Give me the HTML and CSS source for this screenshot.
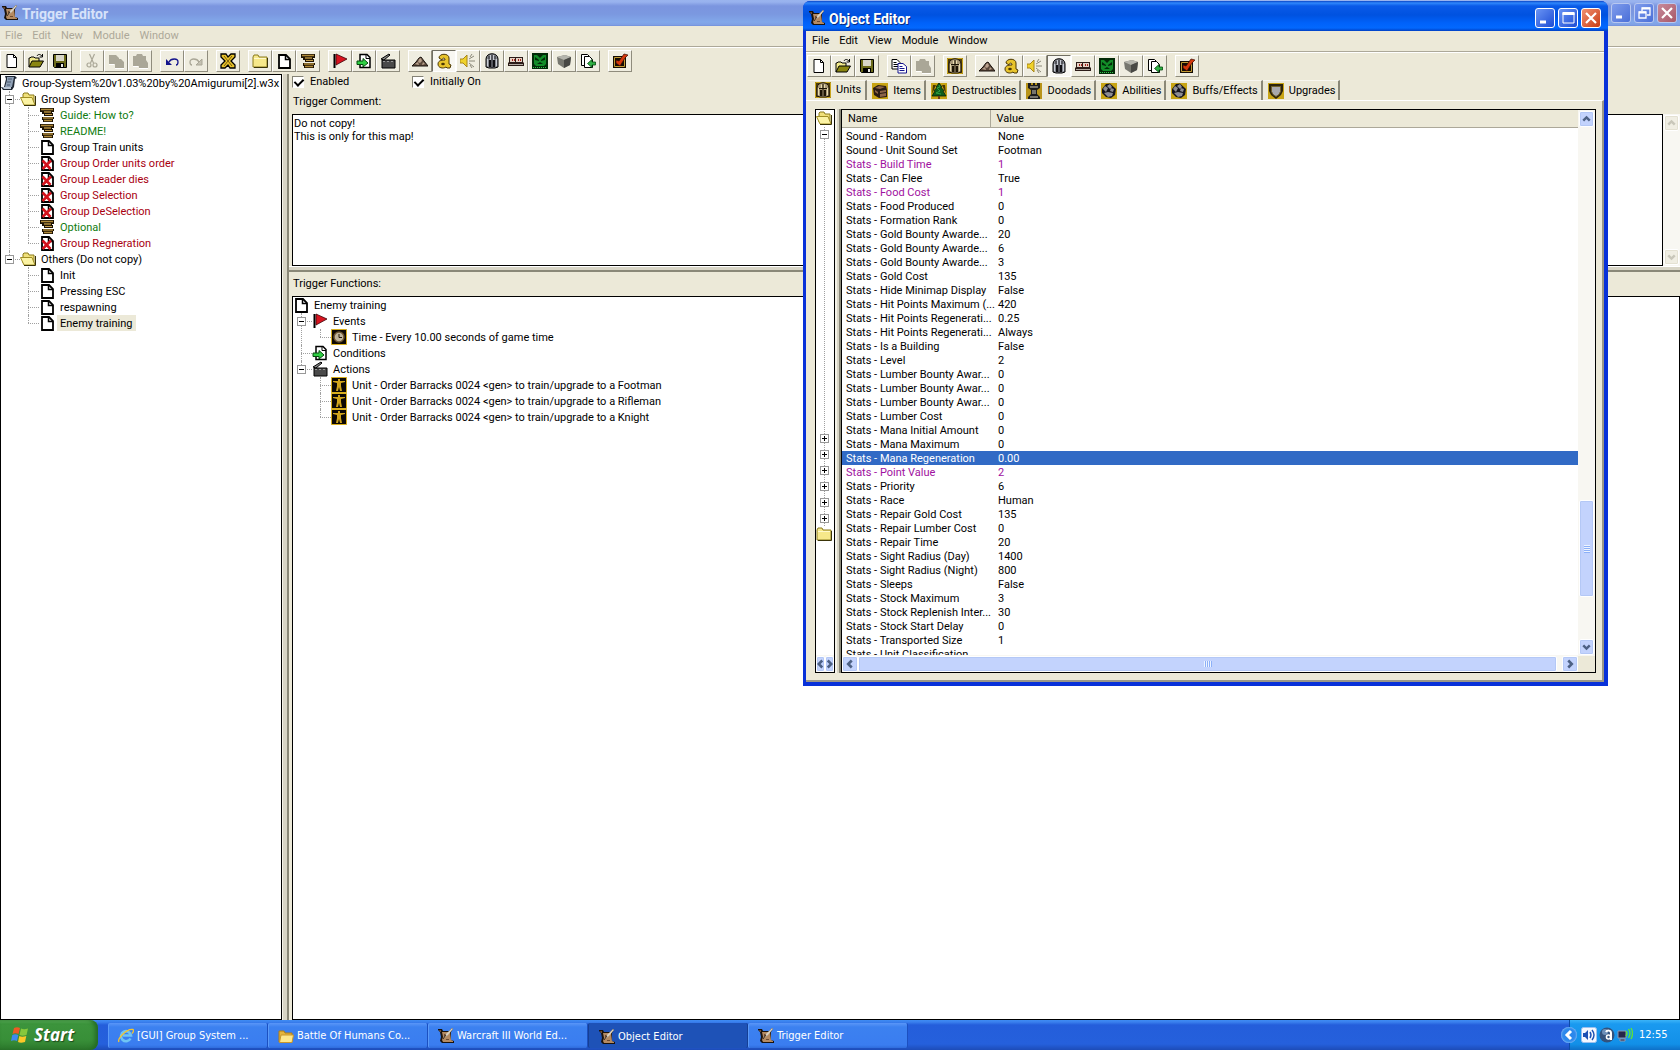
FILE: index.html
```html
<!DOCTYPE html>
<html lang="en">
<head>
  <meta charset="UTF-8">
  <meta name="viewport" content="width=device-width, initial-scale=1.0">
  <title>Trigger Editor</title>
  <link rel="stylesheet" href="styles.css">
</head>
<body>
  <!-- icon sprite -->
  <svg class="sprite" aria-hidden="true">
    <symbol id="app" viewBox="0 0 16 16">
      <path d="M0 1h4l1 2h6l3-3 1 1-2 3v8l3 1v2H4l-2-2 1-4-1-5-2-2z" fill="#1a120c"/>
      <path d="M4 4h8l1 8 2 1v1H5l-1-2 1-3z" fill="#b48a62"/>
      <path d="M1 2h2v2H2zM6 6h2v3H6zM8 11h3v1H8z" fill="#6d4a30"/>
      <path d="M6 10l2-4 6-6 1 1-5 6z" fill="#d8d0c0"/>
      <path d="M5 11l3-4" stroke="#3a2a1c" fill="none"/>
    </symbol>
    <symbol id="map" viewBox="0 0 16 16">
      <path d="M4 1h10l2 2-2 1-1 8-2 3H2l-2-3h3l2-8z" fill="#1e2733"/>
      <path d="M6 2h7l-2 10H4L6 5z" fill="#8fa0b5"/>
      <path d="M7 4h4M6 7h4M6 10h3" stroke="#4a5a70"/>
      <path d="M1 12h9v2H3z" fill="#b9c4d2"/>
    </symbol>
    <symbol id="new" viewBox="0 0 16 16">
      <path d="M3 1.500h6.500l3 3v10H3z" fill="#fff" stroke="#000"/>
      <path d="M9.500 1.500v3h3" fill="none" stroke="#000"/>
    </symbol>
    <symbol id="page" viewBox="0 0 16 16">
      <path d="M3 2h7l4 4v9H3z" fill="#fff" stroke="#000" stroke-width="1.800"/>
      <path d="M9.500 2v4.500H14" fill="none" stroke="#000" stroke-width="1.500"/>
    </symbol>
    <symbol id="pagex" viewBox="0 0 16 16">
      <path d="M3 2h7l4 4v9H3z" fill="#fff" stroke="#000" stroke-width="1.800"/>
      <path d="M9.500 2v4.500H14" fill="none" stroke="#000" stroke-width="1.500"/>
      <path d="M3.500 5.500l8 8.500M12 5.500L3.500 14" stroke="#d4121c" stroke-width="2.600"/>
    </symbol>
    <symbol id="open" viewBox="0 0 16 16">
      <path d="M1 14V5h1l1-1h3l1 1h4v3" fill="#f2ea8c" stroke="#000"/>
      <path d="M1 14l3-6h11.500l-3.500 6z" fill="#8a8610" stroke="#000"/>
      <path d="M9 3c1-2 3-2 5 0M14.500 1v3h-3" fill="none" stroke="#000"/>
    </symbol>
    <symbol id="save" viewBox="0 0 16 16">
      <path d="M1.500 1.500h13v13h-12l-1-1z" fill="#6b6a1a" stroke="#000"/>
      <path d="M4 2h8v6H4z" fill="#d8d6c8"/>
      <path d="M4 10h8v4H4z" fill="#000"/>
      <path d="M9 11h2v3H9z" fill="#e8e8e0"/>
    </symbol>
    <symbol id="cut" viewBox="0 0 16 16">
      <path d="M5.500 1l4 9M10.500 1l-4 9" fill="none" stroke="#aaa797" stroke-width="1.200"/>
      <circle cx="5" cy="12" r="2" fill="none" stroke="#aaa797" stroke-width="1.200"/>
      <circle cx="11" cy="12" r="2" fill="none" stroke="#aaa797" stroke-width="1.200"/>
    </symbol>
    <symbol id="copyoff" viewBox="0 0 16 16">
      <path d="M1 2h7l3 3v1h2l3 3v6H7v-4H1z" fill="#aaa797"/>
      <path d="M7 15.500h9M1 11.500h5" stroke="#fff"/>
    </symbol>
    <symbol id="pasteoff" viewBox="0 0 16 16">
      <path d="M1 3h3l1-2h5l1 2h3v4l2 3v5H7v-2H1z" fill="#aaa797"/>
      <path d="M7 15.500h9M1 13.500h5" stroke="#fff"/>
    </symbol>
    <symbol id="copy" viewBox="0 0 16 16">
      <path d="M1 1.500h5l3 3V11H1z" fill="#fff" stroke="#000"/>
      <path d="M2.500 4.500h3M2.500 6.500h5M2.500 8.500h5" stroke="#000"/>
      <path d="M7 5.500h5l3.500 3V15H7z" fill="#fff" stroke="#14148c"/>
      <path d="M8.500 8.500h3M8.500 10.500h5M8.500 12.500h5" stroke="#14148c"/>
    </symbol>
    <symbol id="undo" viewBox="0 0 16 16">
      <path d="M5 9c2-4 9-4 9 0 0 2-1 3-2 3" fill="none" stroke="#14148c" stroke-width="1.300"/>
      <path d="M2 6v6h6z" fill="#14148c"/>
    </symbol>
    <symbol id="redo" viewBox="0 0 16 16">
      <path d="M11 9c-2-4-9-4-9 0 0 2 1 3 2 3" fill="none" stroke="#aaa797" stroke-width="1.300"/>
      <path d="M14 6v6H8z" fill="#c4c1b2" stroke="#aaa797"/>
    </symbol>
    <symbol id="vars" viewBox="0 0 16 16">
      <path d="M1 1h5l2 3 3-3h4v3l-4 4 4 4v3h-5l-2-3-3 3H1v-3l4-4-4-4z" fill="#e8c42c" stroke="#000" stroke-width="1.300"/>
      <path d="M4 3l8 10M12 3l-8 10" stroke="#7a5a08"/>
    </symbol>
    <symbol id="folder" viewBox="0 0 16 16">
      <path d="M1 4l1-2h4l1 2h8v10H1z" fill="#f6e88a" stroke="#8a7a1c"/>
      <path d="M2 5.500h12" stroke="#fff9cc"/>
      <path d="M2 14.500h13.500V5" fill="none" stroke="#3a3408"/>
    </symbol>
    <symbol id="folderopen" viewBox="0 0 16 16">
      <path d="M3 12V3l1-1h4l1 2h5v9z" fill="#f0e07a" stroke="#8a7a1c"/>
      <path d="M0.500 6.500H12l3 7.500H4z" fill="#fbf3a4" stroke="#a08e24"/>
      <path d="M4 14.500h11.500V5" fill="none" stroke="#3a3408"/>
    </symbol>
    <symbol id="comment" viewBox="0 0 16 16">
      <path d="M1 1h14v4h-2v1h1v3H5V7H3V5H1zM3 10h12v2h-1v3H4v-2H3z" fill="#1c1204"/>
      <path d="M2 2.500h12M5 5h7M4 11h10M5 13.500h8" stroke="#b08a3a" stroke-width="1.300"/>
      <path d="M6 7.500h7" stroke="#c49c4c"/>
    </symbol>
    <symbol id="flag" viewBox="0 0 16 16">
      <path d="M2.500 1v14" stroke="#000" stroke-width="2"/>
      <path d="M4 1l11 5-11 6z" fill="#d81420" stroke="#3c0408" stroke-width=".8"/>
    </symbol>
    <symbol id="cond" viewBox="0 0 16 16">
      <path d="M4 1.500h7l3 3v10H4z" fill="#fff" stroke="#000" stroke-width="1.500"/>
      <path d="M10 1.500v4h4" fill="none" stroke="#000"/>
      <path d="M1 8h6V5.500l5 4.500-5 4v-2.500H1z" fill="#2fd044" stroke="#044a0c"/>
    </symbol>
    <symbol id="action" viewBox="0 0 16 16">
      <path d="M2 7h13v8H2z" fill="#4a4a4a" stroke="#000"/>
      <path d="M1 6l8-5 1 1-6 5z" fill="#888" stroke="#000"/>
      <path d="M3 8.500h12" stroke="#999" stroke-dasharray="2 2"/>
    </symbol>
    <symbol id="terrain" viewBox="0 0 16 16">
      <path d="M0 13l4-4 3-4 2-1 3 4 4 5z" fill="#5c4a3c" stroke="#1a120c"/>
      <path d="M7 6l2-1 1 3-2 2-2-1zM3 11l3-2 1 3zM11 9l2 2-3 1z" fill="#b8a08c"/>
    </symbol>
    <symbol id="trig" viewBox="0 0 16 16">
      <path d="M3 5c0-5 10-5 10 0v6l2 1-1 3h-3l-1-1c-3 2-8 1-8-3 0-4 5-4 7-4 0-3-3-2-3 0z" fill="#e8c42c" stroke="#4a3604"/>
      <ellipse cx="7" cy="11" rx="1.800" ry="1.300" fill="#4a3604"/>
    </symbol>
    <symbol id="sound" viewBox="0 0 16 16">
      <path d="M0 6h3l4-4v12l-4-4H0z" fill="#f0d22a" stroke="#a8861a"/>
      <path d="M9 6l5-3M9 8h6M9 10l5 4M10 4l2-3M10 12l2 3" stroke="#8a8878"/>
    </symbol>
    <symbol id="helm" viewBox="0 0 16 16">
      <path d="M2 14V6c0-7 12-7 12 0v8l-3 1H5z" fill="#85888f" stroke="#000"/>
      <path d="M5 7h2v7H5zM9 7h2v7H9z" fill="#101014"/>
      <path d="M8 2v13M5 3v3M11 3v3" stroke="#26262c"/>
      <path d="M3.500 13V6M12.500 13V6M6.500 2v5M9.500 2v5" stroke="#c8ccd4"/>
    </symbol>
    <symbol id="camp" viewBox="0 0 16 16">
      <path d="M1 4h14v5l1 1v3H0v-3l1-1z" fill="#2c1c18"/>
      <path d="M2 5h5v4H2zM8 5h6v4H8z" fill="#e6d2c4"/>
      <path d="M4 6h1v2H4zM6 6h1v2H6zM10 6h1v2h-1zM12 6h1v2h-1z" fill="#a02018"/>
      <path d="M1 11.500h14" stroke="#b0a8a0"/>
    </symbol>
    <symbol id="ai" viewBox="0 0 16 16">
      <path d="M0 0h16v16H0z" fill="#022a08"/>
      <path d="M2 2h12v9l-2 2H4l-2-2z" fill="#128c28"/>
      <path d="M3 4l4 3v1L3 7zM13 4L9 7v1l4-1zM5 11l3-2 3 2zM4 1h8L8 5z" fill="#022a08"/>
      <path d="M1 14.500h14" stroke="#35c24c" stroke-dasharray="1 1"/>
    </symbol>
    <symbol id="cube" viewBox="0 0 16 16">
      <path d="M1 4l8-2 6 2-1 8-6 3-6-4z" fill="#77776f"/>
      <path d="M1 4l8-2 6 2-7 3z" fill="#b4b4ac"/>
      <path d="M8 7l7-3-1 8-6 3z" fill="#484844"/>
    </symbol>
    <symbol id="import" viewBox="0 0 16 16">
      <path d="M1.500 1.500h6l2 2v9h-8z" fill="#fff" stroke="#000"/>
      <path d="M4.500 3.500h5l3 3v8h-8z" fill="#fff" stroke="#000"/>
      <path d="M15.500 9H12V6.500L7.500 10.500l4.500 4V12h3.500z" fill="#2fb044" stroke="#044a0c" stroke-width=".8"/>
    </symbol>
    <symbol id="test" viewBox="0 0 16 16">
      <path d="M1 3h13v12H1z" fill="#140c04"/>
      <path d="M2.500 4.500h10v9h-10z" fill="none" stroke="#c49c34"/>
      <path d="M4 7l3 1 5-7 4 1-3 3-5 8-4-3z" fill="#d4380c" stroke="#380800" stroke-width=".7"/>
    </symbol>
    <symbol id="clock" viewBox="0 0 16 16">
      <path d="M.5.500h15v15H.5z" fill="#0c0804" stroke="#d8ae1c"/>
      <circle cx="8" cy="8" r="5" fill="#bfb49c" stroke="#6c5430" stroke-width="1.500"/>
      <path d="M8 5v3.500h3" fill="none" stroke="#241808"/>
    </symbol>
    <symbol id="unit" viewBox="0 0 16 16">
      <path d="M.5.500h15v15H.5z" fill="#0c0804" stroke="#d8ae1c"/>
      <path d="M7 2h2v2h5v1l-4 1v3l1 5H9l-1-4-1 4H5l1-5V6L2 5V4h5z" fill="#d0a41c"/>
    </symbol>
    <symbol id="tabunit" viewBox="0 0 16 16">
      <path d="M0 0h16v16H0z" fill="#4c3c0a"/>
      <path d="M.5.500h15v15H.5z" fill="none" stroke="#c8a41c"/>
      <path d="M2 14V6c0-7 12-7 12 0v8l-3 1H5z" fill="#a89878" stroke="#1c1404"/>
      <path d="M5 8h2v6H5zM9 8h2v6H9zM7.500 2h1v12h-1zM4 6h8v1H4z" fill="#1c1404"/>
      <path d="M3.500 13V6M12.500 13V6M6.500 2.500V6M9.500 2.500V6" stroke="#e8dcae"/>
    </symbol>
    <symbol id="tabitem" viewBox="0 0 16 16">
      <path d="M0 0h16v16H0z" fill="#c8a414"/>
      <path d="M1 5l5-3 8 1 1 4v7l-8 1-5-3z" fill="#2a1c14"/>
      <path d="M3 5l4-2 6 1-5 2zM8 8l6-1v2L8 10zM3 7l3 2v2L3 9zM8 11l6-1v3l-6 1z" fill="#8c6448"/>
    </symbol>
    <symbol id="tree" viewBox="0 0 16 16">
      <path d="M0 0h16v16H0z" fill="#c8a414"/>
      <path d="M2 2h3L1 11zM11 2h3l1 9z" fill="#4a3604"/>
      <path d="M8 0l3 4-1 .5 3 3-1 .5 3 5H1l3-5-1-.5 3-3L5 4z" fill="#0d5c1c" stroke="#04200a" stroke-width=".8"/>
      <path d="M8 2l1 2-3 1 3 3-4 2 5 1" fill="none" stroke="#2fa044"/>
      <path d="M7 13h2v3H7z" fill="#6c3c14"/>
    </symbol>
    <symbol id="rook" viewBox="0 0 16 16">
      <path d="M0 0h16v16H0z" fill="#b8941a"/>
      <path d="M2 0h3v2h2V0h2v2h2V0h3v5l-3 2v4l3 3v2H2v-2l3-3V7L2 5z" fill="#1c1c1c"/>
      <path d="M4 3h8v2H4zM6 7h4v4H6zM4 13h8v2H4z" fill="#77746c"/>
    </symbol>
    <symbol id="fist" viewBox="0 0 16 16">
      <path d="M0 0h16v16H0z" fill="#c8a414"/>
      <path d="M1 6l4-5 4-.5 6 5.500-1 6-4 3-5-1-4-4z" fill="#14141c"/>
      <path d="M2 6l2-3 3 2-2 4zM6 3l3-2 2 3-2 2zM10 5l3 1-1 3-3-1zM3 10l4-1 5 1-1 3-4 1z" fill="#8c8c94"/>
    </symbol>
    <symbol id="shield" viewBox="0 0 16 16">
      <path d="M0 0h16v16H0z" fill="#c8a414"/>
      <path d="M1 1h14v7l-2 4-5 4-5-4-2-4z" fill="#2c240c"/>
      <path d="M3.500 3.500h9v5l-1.500 3-3 2-3-2-1.500-3z" fill="#a8a8ac" stroke="#70602c"/>
    </symbol>
    <symbol id="ie" viewBox="0 0 16 16">
      <path d="M12.500 10.500A5 5 0 1 1 13 7.500H5" fill="none" stroke="#6fc4f4" stroke-width="2.600"/>
      <path d="M1 14C-1 11 9 0 15 1.500c1 1 0 3-1 4" fill="none" stroke="#f4c430" stroke-width="1.300"/>
    </symbol>
    <symbol id="xpfolder" viewBox="0 0 16 16">
      <path d="M1 3h5l1 2h7v9H1z" fill="#e4b43c" stroke="#b07c14"/>
      <path d="M3 7h12.500L14 14.500H1.500z" fill="#fde78c" stroke="#c8962c"/>
    </symbol>
    <symbol id="win" viewBox="0 0 20 20">
      <path d="M4 3c2-1 4-1 6 0L8.500 9c-2-1-4-1-6 0z" fill="#ee5a24"/>
      <path d="M11 3.500c2 1 4 1 7 0L16.500 10c-3 1-5 1-7 0z" fill="#86c83c"/>
      <path d="M2.300 10c2-1 4-1 6 0L7 16c-2-1-4-1-6 0z" fill="#3f8af0"/>
      <path d="M9.300 11c2 1 4 1 7 0L15 17c-3 1-5 1-7 0z" fill="#fcc828"/>
    </symbol>
    <symbol id="vol" viewBox="0 0 16 16">
      <rect x=".5" y=".5" width="15" height="15" rx="2" fill="#f4f8ff" stroke="#9cc0ee"/>
      <path d="M2 6h2l3-3v10l-3-3H2z" fill="#1c50b4"/>
      <path d="M9 5q2 3 0 6M11 3q4 5 0 10" fill="none" stroke="#1c50b4" stroke-width="1.400"/>
    </symbol>
    <symbol id="ball" viewBox="0 0 16 16">
      <circle cx="8" cy="8" r="7.500" fill="#33527c"/>
      <circle cx="6" cy="5" r="3" fill="#6d8fb8"/>
      <path d="M7 5c1-2 5-2 5 1v7" fill="none" stroke="#fff" stroke-width="2"/>
      <circle cx="9.500" cy="10" r="2" fill="none" stroke="#fff" stroke-width="1.600"/>
    </symbol>
    <symbol id="net" viewBox="0 0 16 16">
      <path d="M1 4h8v7H1zM3 12h5v2H3z" fill="#26264a" stroke="#8c9ab4"/>
      <path d="M9 4q2 2 0 5M11.500 2q3 4 0 9M14 1q3 5 0 11" fill="none" stroke="#5ee03c" stroke-width="1.400"/>
    </symbol>
    <symbol id="up" viewBox="0 0 16 16"><path d="M4 10l4-4 4 4" fill="none" stroke="currentColor" stroke-width="3"/></symbol>
    <symbol id="down" viewBox="0 0 16 16"><path d="M4 6l4 4 4-4" fill="none" stroke="currentColor" stroke-width="3"/></symbol>
    <symbol id="left" viewBox="0 0 16 16"><path d="M10 4L6 8l4 4" fill="none" stroke="currentColor" stroke-width="3"/></symbol>
    <symbol id="right" viewBox="0 0 16 16"><path d="M6 4l4 4-4 4" fill="none" stroke="currentColor" stroke-width="3"/></symbol>
    <symbol id="min" viewBox="0 0 16 16"><path d="M3 12h6" stroke="#fff" stroke-width="3"/></symbol>
    <symbol id="max" viewBox="0 0 16 16"><path d="M3 3h11v10H3z" fill="none" stroke="#fff"/><path d="M2.500 3.500h12" stroke="#fff" stroke-width="3"/></symbol>
    <symbol id="restore" viewBox="0 0 16 16"><path d="M6 6V3h8v7h-3M3 7h7v6H3z" fill="none" stroke="#fff" stroke-width="1.300"/><path d="M6 3.500h8M3 7.500h7" stroke="#fff" stroke-width="2"/></symbol>
    <symbol id="close" viewBox="0 0 16 16"><path d="M3 3l10 10M13 3L3 13" stroke="#fff" stroke-width="2.200"/></symbol>
  </svg>

  <main class="trigger-editor">
    <header class="titlebar">
      <svg class="icon"><use href="#app"/></svg>
      <h1>Trigger Editor</h1>
      <div class="winbtns">
        <button class="winbtn" aria-label="Minimize"><svg class="icon"><use href="#min"/></svg></button>
        <button class="winbtn" aria-label="Restore"><svg class="icon"><use href="#restore"/></svg></button>
        <button class="winbtn red" aria-label="Close"><svg class="icon"><use href="#close"/></svg></button>
      </div>
    </header>
    <nav class="menu disabled">
      <button>File</button><button>Edit</button><button>New</button><button>Module</button><button>Window</button>
    </nav>
    <div class="toolbar">
      <button aria-label="New map"><svg class="icon"><use href="#new"/></svg></button>
      <button aria-label="Open"><svg class="icon"><use href="#open"/></svg></button>
      <button aria-label="Save"><svg class="icon"><use href="#save"/></svg></button>
      <span class="sep"></span>
      <button aria-label="Cut"><svg class="icon"><use href="#cut"/></svg></button>
      <button aria-label="Copy"><svg class="icon"><use href="#copyoff"/></svg></button>
      <button aria-label="Paste"><svg class="icon"><use href="#pasteoff"/></svg></button>
      <span class="sep"></span>
      <button aria-label="Undo"><svg class="icon"><use href="#undo"/></svg></button>
      <button aria-label="Redo"><svg class="icon"><use href="#redo"/></svg></button>
      <span class="sep"></span>
      <button aria-label="Variables"><svg class="icon"><use href="#vars"/></svg></button>
      <span class="sep"></span>
      <button aria-label="New category"><svg class="icon"><use href="#folder"/></svg></button>
      <button aria-label="New trigger"><svg class="icon"><use href="#page"/></svg></button>
      <button aria-label="New comment"><svg class="icon"><use href="#comment"/></svg></button>
      <span class="sep"></span>
      <button aria-label="New event"><svg class="icon"><use href="#flag"/></svg></button>
      <button aria-label="New condition"><svg class="icon"><use href="#cond"/></svg></button>
      <button aria-label="New action"><svg class="icon"><use href="#action"/></svg></button>
      <span class="sep"></span>
      <button aria-label="Terrain editor"><svg class="icon"><use href="#terrain"/></svg></button>
      <button class="pressed" aria-label="Trigger editor"><svg class="icon"><use href="#trig"/></svg></button>
      <button aria-label="Sound editor"><svg class="icon"><use href="#sound"/></svg></button>
      <button aria-label="Object editor"><svg class="icon"><use href="#helm"/></svg></button>
      <button aria-label="Campaign editor"><svg class="icon"><use href="#camp"/></svg></button>
      <button aria-label="AI editor"><svg class="icon"><use href="#ai"/></svg></button>
      <button aria-label="Object manager"><svg class="icon"><use href="#cube"/></svg></button>
      <button aria-label="Import manager"><svg class="icon"><use href="#import"/></svg></button>
      <span class="sep"></span>
      <button aria-label="Test map"><svg class="icon"><use href="#test"/></svg></button>
    </div>

    <div class="panes">
      <section class="tree-pane">
        <div class="row"><svg class="icon"><use href="#map"/></svg><span>Group-System%20v1.03%20by%20Amigurumi[2].w3x</span></div>
        <ul class="tree">
          <li>
            <div class="row"><button class="toggle" aria-label="Collapse"></button><svg class="icon"><use href="#folderopen"/></svg><span>Group System</span></div>
            <ul>
              <li class="green"><div class="row"><svg class="icon"><use href="#comment"/></svg><span>Guide: How to?</span></div></li>
              <li class="green"><div class="row"><svg class="icon"><use href="#comment"/></svg><span>README!</span></div></li>
              <li><div class="row"><svg class="icon"><use href="#page"/></svg><span>Group Train units</span></div></li>
              <li class="red"><div class="row"><svg class="icon"><use href="#pagex"/></svg><span>Group Order units order</span></div></li>
              <li class="red"><div class="row"><svg class="icon"><use href="#pagex"/></svg><span>Group Leader dies</span></div></li>
              <li class="red"><div class="row"><svg class="icon"><use href="#pagex"/></svg><span>Group Selection</span></div></li>
              <li class="red"><div class="row"><svg class="icon"><use href="#pagex"/></svg><span>Group DeSelection</span></div></li>
              <li class="green"><div class="row"><svg class="icon"><use href="#comment"/></svg><span>Optional</span></div></li>
              <li class="red"><div class="row"><svg class="icon"><use href="#pagex"/></svg><span>Group Regneration</span></div></li>
            </ul>
          </li>
          <li>
            <div class="row"><button class="toggle" aria-label="Collapse"></button><svg class="icon"><use href="#folderopen"/></svg><span>Others (Do not copy)</span></div>
            <ul>
              <li><div class="row"><svg class="icon"><use href="#page"/></svg><span>Init</span></div></li>
              <li><div class="row"><svg class="icon"><use href="#page"/></svg><span>Pressing ESC</span></div></li>
              <li><div class="row"><svg class="icon"><use href="#page"/></svg><span>respawning</span></div></li>
              <li><div class="row"><svg class="icon"><use href="#page"/></svg><span class="current">Enemy training</span></div></li>
            </ul>
          </li>
        </ul>
      </section>
      <div class="splitter"></div>
      <section class="detail-pane">
        <div class="checks">
          <label><input type="checkbox" checked>Enabled</label>
          <label><input type="checkbox" checked>Initially On</label>
        </div>
        <label class="caption" for="comment-text">Trigger Comment:</label>
        <div class="comment-box">
          <textarea id="comment-text">Do not copy!
This is only for this map!</textarea>
          <div class="vscroll off">
            <button aria-label="Scroll up"><svg><use href="#up"/></svg></button>
            <div class="track"></div>
            <button aria-label="Scroll down"><svg><use href="#down"/></svg></button>
          </div>
        </div>
        <div class="hsplit"></div>
        <h2 class="caption">Trigger Functions:</h2>
        <div class="functions">
          <div class="row"><svg class="icon"><use href="#page"/></svg><span>Enemy training</span></div>
          <ul class="tree">
            <li>
              <div class="row"><button class="toggle" aria-label="Collapse"></button><svg class="icon"><use href="#flag"/></svg><span>Events</span></div>
              <ul>
                <li><div class="row"><svg class="icon"><use href="#clock"/></svg><span>Time - Every 10.00 seconds of game time</span></div></li>
              </ul>
            </li>
            <li><div class="row"><svg class="icon"><use href="#cond"/></svg><span>Conditions</span></div></li>
            <li>
              <div class="row"><button class="toggle" aria-label="Collapse"></button><svg class="icon"><use href="#action"/></svg><span>Actions</span></div>
              <ul>
                <li><div class="row"><svg class="icon"><use href="#unit"/></svg><span>Unit - Order Barracks 0024 &lt;gen&gt; to train/upgrade to a Footman</span></div></li>
                <li><div class="row"><svg class="icon"><use href="#unit"/></svg><span>Unit - Order Barracks 0024 &lt;gen&gt; to train/upgrade to a Rifleman</span></div></li>
                <li><div class="row"><svg class="icon"><use href="#unit"/></svg><span>Unit - Order Barracks 0024 &lt;gen&gt; to train/upgrade to a Knight</span></div></li>
              </ul>
            </li>
          </ul>
        </div>
      </section>
    </div>

    <footer class="taskbar">
      <button class="start"><svg class="winlogo"><use href="#win"/></svg>Start</button>
      <div class="tasks">
        <button class="task"><svg class="icon"><use href="#ie"/></svg>[GUI] Group System ...</button>
        <button class="task"><svg class="icon"><use href="#xpfolder"/></svg>Battle Of Humans Co...</button>
        <button class="task"><svg class="icon"><use href="#app"/></svg>Warcraft III World Ed...</button>
        <button class="task active"><svg class="icon"><use href="#app"/></svg>Object Editor</button>
        <button class="task"><svg class="icon"><use href="#app"/></svg>Trigger Editor</button>
      </div>
      <div class="tray">
        <button class="expand" aria-label="Show hidden icons"><svg class="icon"><use href="#left"/></svg></button>
        <svg class="icon"><use href="#vol"/></svg>
        <svg class="icon"><use href="#ball"/></svg>
        <svg class="icon"><use href="#net"/></svg>
        <time>12:55</time>
      </div>
    </footer>
  </main>

  <section class="object-editor">
    <header class="titlebar">
      <svg class="icon"><use href="#app"/></svg>
      <h1>Object Editor</h1>
      <div class="winbtns">
        <button class="winbtn" aria-label="Minimize"><svg class="icon"><use href="#min"/></svg></button>
        <button class="winbtn" aria-label="Maximize"><svg class="icon"><use href="#max"/></svg></button>
        <button class="winbtn red" aria-label="Close"><svg class="icon"><use href="#close"/></svg></button>
      </div>
    </header>
    <div class="window-body">
      <nav class="menu">
        <button>File</button><button>Edit</button><button>View</button><button>Module</button><button>Window</button>
      </nav>
      <div class="toolbar">
        <button aria-label="New map"><svg class="icon"><use href="#new"/></svg></button>
        <button aria-label="Open"><svg class="icon"><use href="#open"/></svg></button>
        <button aria-label="Save"><svg class="icon"><use href="#save"/></svg></button>
        <span class="sep"></span>
        <button aria-label="Copy"><svg class="icon"><use href="#copy"/></svg></button>
        <button aria-label="Paste"><svg class="icon"><use href="#pasteoff"/></svg></button>
        <span class="sep"></span>
        <button aria-label="New unit"><svg class="icon"><use href="#tabunit"/></svg></button>
        <span class="sep"></span>
        <button aria-label="Terrain editor"><svg class="icon"><use href="#terrain"/></svg></button>
        <button aria-label="Trigger editor"><svg class="icon"><use href="#trig"/></svg></button>
        <button aria-label="Sound editor"><svg class="icon"><use href="#sound"/></svg></button>
        <button class="pressed" aria-label="Object editor"><svg class="icon"><use href="#helm"/></svg></button>
        <button aria-label="Campaign editor"><svg class="icon"><use href="#camp"/></svg></button>
        <button aria-label="AI editor"><svg class="icon"><use href="#ai"/></svg></button>
        <button aria-label="Object manager"><svg class="icon"><use href="#cube"/></svg></button>
        <button aria-label="Import manager"><svg class="icon"><use href="#import"/></svg></button>
        <span class="sep"></span>
        <button aria-label="Test map"><svg class="icon"><use href="#test"/></svg></button>
      </div>
      <div class="tabs">
        <button class="tab selected"><svg class="icon"><use href="#tabunit"/></svg>Units</button>
        <button class="tab"><svg class="icon"><use href="#tabitem"/></svg>Items</button>
        <button class="tab"><svg class="icon"><use href="#tree"/></svg>Destructibles</button>
        <button class="tab"><svg class="icon"><use href="#rook"/></svg>Doodads</button>
        <button class="tab"><svg class="icon"><use href="#fist"/></svg>Abilities</button>
        <button class="tab"><svg class="icon"><use href="#fist"/></svg>Buffs/Effects</button>
        <button class="tab"><svg class="icon"><use href="#shield"/></svg>Upgrades</button>
      </div>
      <div class="tab-page">
        <div class="mini-tree">
          <svg class="icon"><use href="#folderopen"/></svg>
          <ul>
            <li class="expanded"><button class="toggle" aria-label="Collapse"></button></li>
            <li><button class="toggle plus" aria-label="Expand"></button></li>
            <li><button class="toggle plus" aria-label="Expand"></button></li>
            <li><button class="toggle plus" aria-label="Expand"></button></li>
            <li><button class="toggle plus" aria-label="Expand"></button></li>
            <li><button class="toggle plus" aria-label="Expand"></button></li>
            <li><button class="toggle plus" aria-label="Expand"></button></li>
          </ul>
          <svg class="icon"><use href="#folder"/></svg>
          <div class="hscroll">
            <button aria-label="Scroll left"><svg viewBox="4 0 8 16"><use href="#left" width="16" height="16"/></svg></button>
            <button aria-label="Scroll right"><svg viewBox="4 0 8 16"><use href="#right" width="16" height="16"/></svg></button>
          </div>
        </div>
        <div class="list-split"></div>
        <div class="list">
          <div class="list-main">
            <div class="list-view">
              <table>
                <thead><tr><th class="name">Name</th><th>Value</th></tr></thead>
                <tbody>
                  <tr><td>Sound - Random</td><td>None</td></tr>
                  <tr><td>Sound - Unit Sound Set</td><td>Footman</td></tr>
                  <tr class="changed"><td>Stats - Build Time</td><td>1</td></tr>
                  <tr><td>Stats - Can Flee</td><td>True</td></tr>
                  <tr class="changed"><td>Stats - Food Cost</td><td>1</td></tr>
                  <tr><td>Stats - Food Produced</td><td>0</td></tr>
                  <tr><td>Stats - Formation Rank</td><td>0</td></tr>
                  <tr><td>Stats - Gold Bounty Awarde...</td><td>20</td></tr>
                  <tr><td>Stats - Gold Bounty Awarde...</td><td>6</td></tr>
                  <tr><td>Stats - Gold Bounty Awarde...</td><td>3</td></tr>
                  <tr><td>Stats - Gold Cost</td><td>135</td></tr>
                  <tr><td>Stats - Hide Minimap Display</td><td>False</td></tr>
                  <tr><td>Stats - Hit Points Maximum (...</td><td>420</td></tr>
                  <tr><td>Stats - Hit Points Regenerati...</td><td>0.25</td></tr>
                  <tr><td>Stats - Hit Points Regenerati...</td><td>Always</td></tr>
                  <tr><td>Stats - Is a Building</td><td>False</td></tr>
                  <tr><td>Stats - Level</td><td>2</td></tr>
                  <tr><td>Stats - Lumber Bounty Awar...</td><td>0</td></tr>
                  <tr><td>Stats - Lumber Bounty Awar...</td><td>0</td></tr>
                  <tr><td>Stats - Lumber Bounty Awar...</td><td>0</td></tr>
                  <tr><td>Stats - Lumber Cost</td><td>0</td></tr>
                  <tr><td>Stats - Mana Initial Amount</td><td>0</td></tr>
                  <tr><td>Stats - Mana Maximum</td><td>0</td></tr>
                  <tr class="selected"><td>Stats - Mana Regeneration</td><td>0.00</td></tr>
                  <tr class="changed"><td>Stats - Point Value</td><td>2</td></tr>
                  <tr><td>Stats - Priority</td><td>6</td></tr>
                  <tr><td>Stats - Race</td><td>Human</td></tr>
                  <tr><td>Stats - Repair Gold Cost</td><td>135</td></tr>
                  <tr><td>Stats - Repair Lumber Cost</td><td>0</td></tr>
                  <tr><td>Stats - Repair Time</td><td>20</td></tr>
                  <tr><td>Stats - Sight Radius (Day)</td><td>1400</td></tr>
                  <tr><td>Stats - Sight Radius (Night)</td><td>800</td></tr>
                  <tr><td>Stats - Sleeps</td><td>False</td></tr>
                  <tr><td>Stats - Stock Maximum</td><td>3</td></tr>
                  <tr><td>Stats - Stock Replenish Inter...</td><td>30</td></tr>
                  <tr><td>Stats - Stock Start Delay</td><td>0</td></tr>
                  <tr><td>Stats - Transported Size</td><td>1</td></tr>
                  <tr><td>Stats - Unit Classification</td><td></td></tr>
                </tbody>
              </table>
            </div>
            <div class="hscroll">
              <button aria-label="Scroll left"><svg><use href="#left"/></svg></button>
              <div class="track"><div class="thumb"></div></div>
              <button aria-label="Scroll right"><svg><use href="#right"/></svg></button>
            </div>
          </div>
          <div class="vscroll">
            <button aria-label="Scroll up"><svg><use href="#up"/></svg></button>
            <div class="track"><div class="thumb"></div></div>
            <button aria-label="Scroll down"><svg><use href="#down"/></svg></button>
          </div>
        </div>
      </div>
    </div>
  </section>
</body>
</html>
```

FILE: styles.css
```css
* {
  box-sizing: border-box;
}
body {
  margin: 0;
  height: 100vh;
  overflow: hidden;
  font-family: Roboto, Arial, sans-serif;
  font-size: 11px;
  line-height: 14px;
  color: #000;
  background: #ece9d8;
}
button {
  font: inherit;
  color: inherit;
  margin: 0;
  padding: 0;
  border: 0;
  background: none;
}
ul {
  list-style: none;
  margin: 0;
  padding: 0;
}
.sprite {
  display: none;
}
.icon {
  width: 16px;
  height: 16px;
  flex: none;
  display: block;
}

/* window frame */
.trigger-editor {
  height: 100vh;
  display: flex;
  flex-direction: column;
}
.titlebar {
  display: flex;
  align-items: center;
  height: 26px;
  padding: 0 3px 0 2px;
  color: #d6e2fa;
  background: linear-gradient(#9ab4ee 0, #98b2ee 2px, #7b95df 6px, #7b98e0 14px, #82a8ea 22px, #7f9fe4 25px, #6f8cd8 26px);
}
.titlebar h1 {
  flex: 1;
  margin: 0 0 0 4px;
  padding-top: 2px;
  font-size: 14px;
  line-height: 18px;
  font-weight: bold;
}
.winbtns {
  display: flex;
  gap: 3px;
}
.winbtn {
  width: 20px;
  height: 20px;
  padding: 1px;
  border: 1px solid #b9c8f0;
  border-radius: 3px;
  background: linear-gradient(135deg, #7f9cec, #4a6fd8);
}
.winbtn.red {
  background: linear-gradient(135deg, #c78a9a, #a85868);
}
.menu {
  display: flex;
  gap: 10px;
  height: 22px;
  padding: 1px 5px 3px;
  border-bottom: 1px solid #fff;
  box-shadow: inset 0 -1px #aca899;
}
.menu.disabled {
  color: #aca899;
}
.toolbar {
  display: flex;
  height: 26px;
  padding: 2px 0;
}
.toolbar button {
  width: 24px;
  display: flex;
  align-items: center;
  justify-content: center;
  background: #efede0;
  border: 1px solid;
  border-color: #fff #8f8c7d #8f8c7d #fff;
}
.toolbar button.pressed {
  background: #f8f7f2;
  border-color: #716f64 #fff #fff #716f64;
}
.toolbar .sep {
  width: 8px;
}

/* trigger editor */
.panes {
  flex: 1;
  min-height: 0;
  display: flex;
}
.tree-pane {
  width: 282px;
  background: #fff;
  border: 1px solid #000;
}
.row {
  display: flex;
  align-items: center;
  height: 16px;
  white-space: nowrap;
}
.row span {
  margin-left: 2px;
  padding: 2px 3px 0;
}
.row span.current {
  background: #ece9d8;
}
.tree li {
  position: relative;
  padding-left: 19px;
}
.tree li::before {
  content: "";
  position: absolute;
  left: 8px;
  top: 0;
  bottom: 0;
  border-left: 1px dotted #a0a0a0;
}
.tree li:last-child::before {
  bottom: auto;
  height: 8px;
}
.tree li::after {
  content: "";
  position: absolute;
  left: 8px;
  top: 8px;
  width: 11px;
  border-top: 1px dotted #a0a0a0;
}
.tree .toggle {
  position: absolute;
  left: 4px;
  top: 4px;
  z-index: 1;
}
.toggle {
  display: block;
  width: 9px;
  height: 9px;
  border: 1px solid #989898;
  background: linear-gradient(#000, #000) center / 5px 1px no-repeat, #fff;
}
.toggle.plus {
  background: linear-gradient(#000, #000) center / 5px 1px no-repeat, linear-gradient(#000, #000) center / 1px 5px no-repeat, #fff;
}
.green {
  color: #107c10;
}
.red {
  color: #a80010;
}
.splitter {
  width: 7px;
  background: #d8d5c6;
  border-left: 1px solid #f4f2e8;
  border-right: 2px solid #8a8878;
}
.detail-pane {
  flex: 1;
  min-width: 0;
  display: flex;
  flex-direction: column;
  padding-left: 3px;
}
.checks {
  display: flex;
  height: 16px;
}
.checks label {
  display: flex;
  align-items: center;
  gap: 6px;
  width: 120px;
}
.checks input {
  width: 12px;
  height: 12px;
  margin: 0;
  appearance: none;
  background: #fff;
  border: 1px solid;
  border-color: #848276 #fff #fff #848276;
}
.checks input:checked::after {
  content: "";
  display: block;
  width: 4px;
  height: 7px;
  margin: 0 3px;
  border: solid #000;
  border-width: 0 2px 2px 0;
  transform: rotate(45deg);
}
.caption {
  margin: 0;
  padding: 5px 0 5px 1px;
  font-size: 11px;
  font-weight: normal;
}
.comment-box {
  display: flex;
  height: 152px;
}
textarea {
  flex: 1;
  resize: none;
  margin: 0;
  padding: 2px 1px 0;
  border: 1px solid #000;
  border-radius: 0;
  outline: 0;
  font: inherit;
  line-height: 13px;
  background: #fff;
}
.hsplit {
  height: 6px;
  margin: 0 0 0 -3px;
  border-top: 1px solid #fff;
  border-bottom: 2px solid #8a8878;
  background: #d8d5c6;
}
.functions {
  flex: 1;
  background: #fff;
  border: 1px solid #000;
}

/* scroll bars */
.vscroll {
  width: 17px;
  display: flex;
  flex-direction: column;
  padding: 1px;
  background: #f8f7f2;
}
.hscroll {
  height: 17px;
  display: flex;
  padding: 1px 0 0;
  background: #f8f7f2;
}
.vscroll .track,
.hscroll .track {
  flex: 1;
  display: flex;
}
.vscroll .track {
  flex-direction: column;
}
.vscroll button,
.hscroll button,
.thumb {
  color: #4d6185;
  border: 1px solid #fff;
  border-radius: 2px;
  background: #c3d3fd;
  box-shadow: 0 0 0 1px #b4c8f6 inset;
}
.vscroll button {
  height: 16px;
}
.hscroll button {
  width: 16px;
}
.hscroll svg,
.vscroll svg {
  width: 100%;
  height: 100%;
  display: block;
}
.off button {
  color: #c9c7ba;
  background: #f0eee3;
  box-shadow: 0 0 0 1px #e4e1d2 inset;
}

/* object editor window */
.object-editor {
  position: absolute;
  left: 803px;
  top: 1px;
  width: 805px;
  height: 685px;
  display: flex;
  flex-direction: column;
  background: #0831d9;
  border-radius: 7px 7px 0 0;
  overflow: hidden;
}
.object-editor .titlebar {
  height: 30px;
  padding: 3px 7px 0 6px;
  color: #fff;
  background: linear-gradient(#0a46c8 0, #2f88fc 2px, #0a5ae8 5px, #0052e0 14px, #0062fa 22px, #0268fe 27px, #0040c4 30px);
}
.object-editor h1 {
  text-shadow: 1px 1px #0a2c84;
}
.object-editor .winbtn {
  border-color: #fff;
  background: linear-gradient(135deg, #6a94f4, #1c4cd4);
}
.object-editor .winbtn.red {
  background: linear-gradient(135deg, #f09070, #c83c14);
}
.window-body {
  flex: 1;
  min-height: 0;
  margin: 0 4px 4px 3px;
  display: flex;
  flex-direction: column;
  background: #ece9d8;
}
.window-body .menu {
  padding: 1px 6px 2px;
}
.window-body .toolbar {
  padding: 2px 1px;
}
.tabs {
  display: flex;
  height: 21px;
  padding: 1px 0 0 2px;
}
.tab {
  display: flex;
  align-items: center;
  gap: 5px;
  padding: 1px 3px 0 5px;
  border-top: 1px solid #f8f7f0;
  border-right: 2px solid #8a8878;
}
.tab.selected {
  padding: 0 4px 1px 7px;
}
.tab-page {
  flex: 1;
  min-height: 0;
  display: flex;
  padding: 8px 6px 7px 9px;
  border-top: 1px solid #fff;
  border-right: 2px solid #9a9788;
  border-bottom: 2px solid #9a9788;
}
.mini-tree {
  width: 20px;
  display: flex;
  flex-direction: column;
  background: #fff;
  border: 1px solid #000;
}
.mini-tree ul {
  width: 9px;
  margin-left: 4px;
  background: repeating-linear-gradient(#fff 0, #fff 1px, transparent 1px, transparent 2px), linear-gradient(90deg, #fff 4px, #a0a0a0 4px, #a0a0a0 5px, #fff 5px);
}
.mini-tree li {
  height: 16px;
  padding-top: 4px;
}
.mini-tree .expanded {
  height: 304px;
}
.mini-tree .hscroll {
  margin-top: auto;
}
.mini-tree .hscroll button {
  flex: 1;
  width: 9px;
}
.list-split {
  width: 6px;
  background: #d8d5c6;
  border-left: 2px solid #f4f2e8;
  border-right: 2px solid #8a8878;
}
.list {
  flex: 1;
  min-width: 0;
  display: flex;
  background: #ece9d8;
  border: 1px solid #000;
}
.list-main {
  flex: 1;
  min-width: 0;
  display: flex;
  flex-direction: column;
}
.list-view {
  flex: 1;
  min-height: 0;
  overflow: hidden;
  background: #fff;
}
.list table {
  width: 100%;
  table-layout: fixed;
  border-collapse: collapse;
}
.list th {
  height: 17px;
  padding: 2px 6px 0;
  text-align: left;
  font-weight: normal;
  background: #ece9d8;
  border-bottom: 1px solid #aca899;
}
.list th.name {
  width: 148px;
  border-right: 1px solid #aca899;
}
.list tbody::before {
  content: "";
  display: block;
  height: 1px;
}
.list td {
  height: 14px;
  padding: 1px 4px 0;
  line-height: 13px;
  white-space: nowrap;
}
.list td + td {
  padding-left: 8px;
}
.changed {
  color: #a010a0;
}
.list tr.selected {
  color: #fff;
  background: #316ac5;
}
.list .vscroll {
  margin-bottom: 16px;
}
.list .vscroll .thumb {
  height: 97px;
  margin-top: auto;
  margin-bottom: 42px;
}
.thumb {
  display: flex;
  align-items: center;
  justify-content: center;
}
.vscroll .thumb::after {
  content: "";
  width: 6px;
  height: 8px;
  background: repeating-linear-gradient(#eef4fe 0, #eef4fe 1px, #8cb0f8 1px, #8cb0f8 2px);
}
.hscroll .thumb {
  flex: 1;
  margin-right: 5px;
}
.hscroll .thumb::after {
  content: "";
  width: 8px;
  height: 6px;
  background: repeating-linear-gradient(90deg, #eef4fe 0, #eef4fe 1px, #8cb0f8 1px, #8cb0f8 2px);
}

/* taskbar */
.taskbar {
  height: 30px;
  display: flex;
  color: #fff;
  font-family: "DejaVu Sans Condensed", "DejaVu Sans", sans-serif;
  background: linear-gradient(#3f8cf3 0, #3a80ee 2px, #245edb 5px, #2560dc 24px, #1d4cb8 30px);
}
.start {
  width: 98px;
  display: flex;
  align-items: center;
  gap: 4px;
  padding-left: 10px;
  border-radius: 0 8px 8px 0;
  font-family: "Open Sans", "Noto Sans", sans-serif;
  font-size: 17px;
  font-weight: bold;
  font-style: italic;
  text-shadow: 1px 1px 1px #1c4a1c;
  background: linear-gradient(#5cb45c 0, #3c943c 4px, #388f38 20px, #2c782c 30px);
  box-shadow: inset -3px 0 4px #246a24;
}
.winlogo {
  width: 20px;
  height: 20px;
}
.tasks {
  flex: 1;
  display: flex;
  padding: 3px 0 2px 10px;
}
.task {
  width: 160px;
  display: flex;
  align-items: center;
  gap: 3px;
  padding-left: 9px;
  border-left: 1px solid #5a9af8;
  border-right: 1px solid #1c50c0;
  border-radius: 2px;
  background: linear-gradient(#5a96f8 0, #3c81f0 4px, #3a7df0 22px, #2f6cdc 25px);
}
.task.active {
  padding: 2px 0 0 10px;
  background: #1e52b7;
  border-color: #163f94;
}
.tray {
  display: flex;
  align-items: center;
  gap: 2px;
  width: 111px;
  background: linear-gradient(#3cb4f8 0, #1a9af0 4px, #1290e8 24px, #0e70c8 30px);
  border-left: 1px solid #0c4ca8;
}
.expand {
  margin-left: -9px;
  margin-right: 2px;
  border-radius: 8px;
  background: #2c88ec;
  box-shadow: inset 0 0 2px #cfe6ff;
}
.tray time {
  margin-left: 4px;
}
```
